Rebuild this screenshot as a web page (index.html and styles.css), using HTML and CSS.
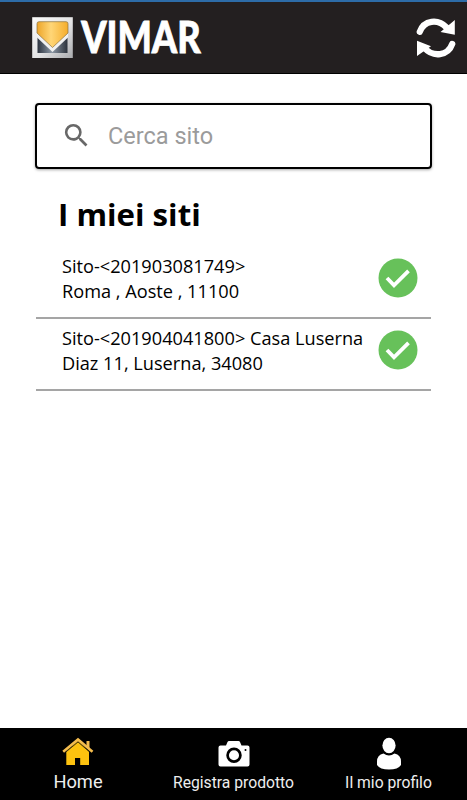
FILE: index.html
```html
<!DOCTYPE html>
<html lang="it">
<head>
<meta charset="utf-8">
<title>Vimar</title>
<link rel="stylesheet" href="styles.css">
</head>
<body>
<div class="app">
  <header class="header">
    <svg class="logo" width="180" height="50" viewBox="0 0 180 50" role="img" aria-label="VIMAR">
      <defs>
        <linearGradient id="frame" x1="0" y1="0" x2="1" y2="1"><stop offset="0" stop-color="#fafafa"/><stop offset=".55" stop-color="#e4e4e5"/><stop offset="1" stop-color="#a9aaad"/></linearGradient>
        <linearGradient id="gold" x1="0" y1="0" x2="1" y2="0"><stop offset="0" stop-color="#eda529"/><stop offset=".45" stop-color="#ffd677"/><stop offset="1" stop-color="#f5ad2b"/></linearGradient>
        <linearGradient id="steel" x1="0" y1="0" x2="1" y2="0"><stop offset="0" stop-color="#2d3440"/><stop offset=".48" stop-color="#8d98a5"/><stop offset="1" stop-color="#2c323c"/></linearGradient>
      </defs>
      <rect x="0.2" y="0.2" width="40.6" height="40.8" fill="url(#frame)"/>
      <path d="M5.500 19V36h30V19L20.500 33z" fill="url(#steel)"/>
      <path d="M5 15v5.500L20.500 35 36 20.500V15z" fill="#f1f1f1"/>
      <path d="M7 4.700h27q2 0 2 2V16L20.500 30.500 5 16V6.700q0-2 2-2z" fill="url(#gold)" stroke="#8b713d" stroke-width=".7"/>
      <text class="brand" x="49.200" y="36.200" textLength="119.500" lengthAdjust="spacingAndGlyphs">VIMAR</text>
    </svg>
    <svg class="refresh" width="40" height="44" viewBox="0 0 40 44">
      <path d="M3.800 15.800C8 4 22 2.500 30.500 11.500M36.200 28C32 40 17 41.500 8.500 32" fill="none" stroke="#fff" stroke-width="6.300" stroke-linecap="round"/>
      <path d="M38.800 4v14.800L24.500 16zM1 24.800l14 5.500L1 40z" fill="#fff"/>
    </svg>
  </header>
  <main class="main">
    <label class="search">
      <svg class="search-icon" width="31" height="31" viewBox="0 0 24 24"><path fill="#686868" d="M15.500 14h-.79l-.28-.27A6.470 6.470 0 0 0 16 9.500 6.500 6.500 0 1 0 9.500 16c1.610 0 3.090-.59 4.230-1.570l.27.28v.79l5 4.990L20.490 19zm-6 0a4.500 4.500 0 1 1 0-9 4.500 4.500 0 0 1 0 9z"/></svg>
      <input class="search-input" type="text" placeholder="Cerca sito">
    </label>
    <h1 class="title">I miei siti</h1>
    <ul class="sites">
      <li class="site">
        <div class="site-text">Sito-&lt;201903081749&gt;<br>Roma , Aoste , 11100</div>
        <svg class="check" width="40" height="40" viewBox="0 0 40 40"><circle cx="20" cy="20" r="19.500" fill="#67c15a"/><path d="M9 20l7 7.300 14.500-14.500" fill="none" stroke="#fff" stroke-width="3.800"/></svg>
      </li>
      <li class="site">
        <div class="site-text">Sito-&lt;201904041800&gt; Casa Luserna<br>Diaz 11, Luserna, 34080</div>
        <svg class="check" width="40" height="40" viewBox="0 0 40 40"><circle cx="20" cy="20" r="19.500" fill="#67c15a"/><path d="M9 20l7 7.300 14.500-14.500" fill="none" stroke="#fff" stroke-width="3.800"/></svg>
      </li>
    </ul>
  </main>
  <nav class="tabs">
    <a class="tab tab-home">
      <svg width="32" height="36" viewBox="0 0 32 36"><path fill="#fdc20f" d="M4.300 20.500L16 10l11 10.500V34H18.200v-7H13v7H4.300z"/><path fill="#f5bd4e" d="M24.500 10h3v8l-3-3z"/><path fill="none" stroke="#f5bd4e" stroke-width="2.600" d="M1.200 20.800L16 8.500l14.500 12.300"/><path fill="none" stroke="#1c1503" stroke-width=".8" d="M3.500 21.300L16 11 28 21.300"/></svg>
      <span class="label">Home</span>
    </a>
    <a class="tab tab-product">
      <svg width="32" height="36" viewBox="0 0 32 36"><path fill="#fff" d="M2.500 14.500H8L9.500 11Q10 10 11 10h9.500q1 0 1.500 1l1.500 3.500h6q2 0 2 2v17q0 2-2 2h-27q-2 0-2-2v-17q0-2 2-2z"/><circle cx="16" cy="24.300" r="6.400" fill="none" stroke="#000" stroke-width="2.700"/><circle cx="27.500" cy="19" r="1" fill="#000"/></svg>
      <span class="label">Registra prodotto</span>
    </a>
    <a class="tab tab-profile">
      <svg width="26" height="36" viewBox="0 0 26 36"><ellipse cx="13" cy="14.500" rx="6.600" ry="7.700" fill="#fff"/><path fill="#fff" d="M7.500 22.500Q13 26.500 18.500 22.500 25 24 25 30.500v3.500q-3 4.500-12 4.500T1 34v-3.500q0-6.500 6.500-8z"/></svg>
      <span class="label">Il mio profilo</span>
    </a>
  </nav>
</div>
</body>
</html>
```
FILE: styles.css
```css
* { box-sizing: border-box; }
body { margin: 0; background: #fff; }
.app { display: flex; flex-direction: column; width: 467px; height: 800px; overflow: hidden; }
.header {
  display: flex; justify-content: space-between; align-items: flex-start;
  height: 74px; padding: 14px 11px 0 32px;
  background: #231f20; border-top: 2px solid #2d6ca8; border-bottom: 1px solid #000;
}
.logo { margin-top: 1px; overflow: visible; }
.brand { font: 900 43.500px Lato, sans-serif; fill: #fff; stroke: #fff; stroke-width: .8px; }
.refresh { flex: none; }
.main { flex: 1; padding: 29px 35px 0; }
.search {
  display: flex; align-items: center; height: 66px; padding-left: 24px;
  border: 2px solid #000; border-radius: 4px; box-shadow: 0 1px 3px rgba(0, 0, 0, .35);
}
.search-icon { flex: none; margin-top: -1px; }
.search-input {
  flex: 1; min-width: 0; margin: 0 0 0 16px; padding: 0; border: 0; outline: 0; background: none;
  font: 400 23.500px Roboto, sans-serif; color: #000;
}
.search-input::placeholder { color: #9b9b9b; opacity: 1; }
.title { margin: 23px 0 0 23px; font: 700 31.200px/44px "Open Sans", sans-serif; color: #000; }
.sites { margin: 11px 1px 0; padding: 0; list-style: none; }
.site {
  display: flex; justify-content: space-between; height: 72px; padding: 7px 13px 0 26px;
  border-bottom: 2px solid #a5a5a5;
}
.site-text { font: 400 18.180px/25px "Open Sans", sans-serif; color: #000; white-space: nowrap; }
.check { flex: none; margin-top: 4px; }
.tabs { display: flex; height: 72px; background: #000; }
.tab { display: flex; flex-direction: column; align-items: center; padding-top: 3px; }
.tab svg { overflow: visible; }
.tab-home { width: 156px; }
.tab-product { width: 155px; }
.tab-profile { width: 155px; }
.label { font: 400 15.700px/32px Roboto, sans-serif; color: #eee; white-space: nowrap; }
.tab-home .label { font-size: 18.300px; line-height: 30px; }
```
